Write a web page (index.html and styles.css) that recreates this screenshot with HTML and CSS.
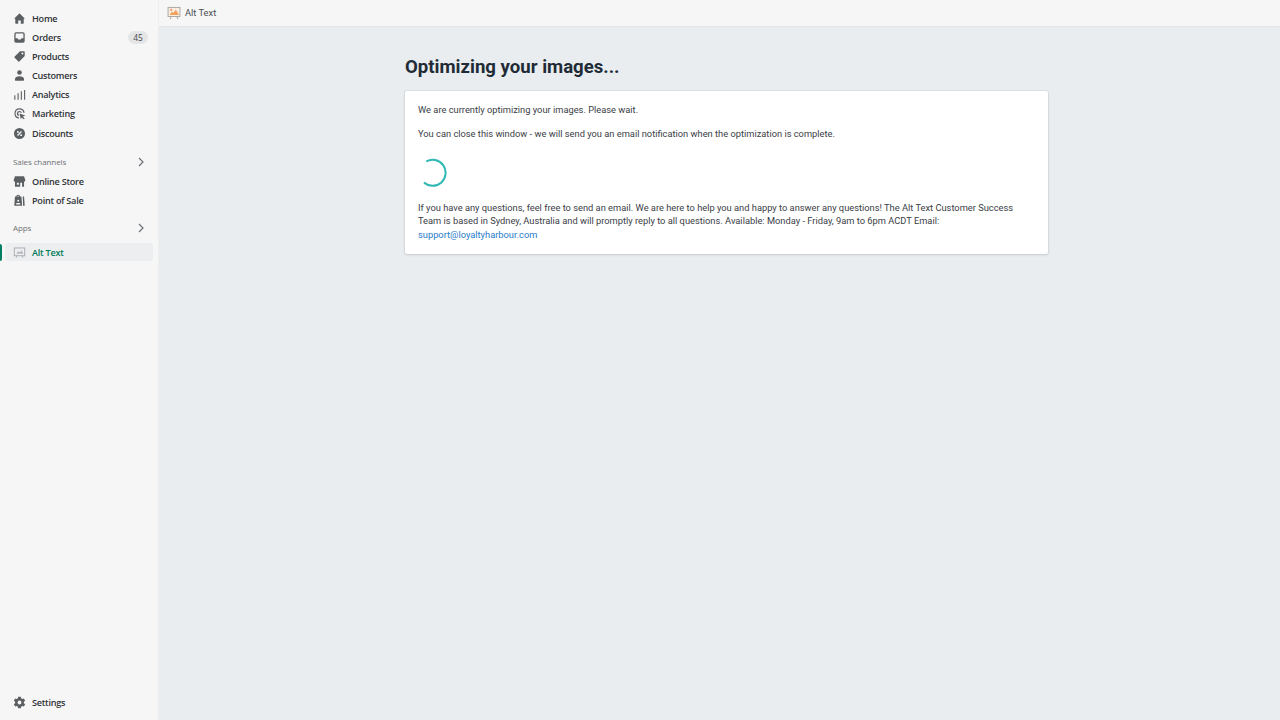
FILE: index.html
```html
<!DOCTYPE html>
<html lang="en">
<head>
<meta charset="utf-8">
<title>Alt Text</title>
<link rel="stylesheet" href="styles.css">
</head>
<body>
<div class="app">
  <nav class="sidebar">
    <ul class="nav-list">
      <li class="nav-item"><svg class="icon" viewBox="0 0 20 20"><path d="M18 10 10.700 2.600a1 1 0 0 0-1.400 0L2 10v.5h1.500V17a1 1 0 0 0 1 1H8v-5h4v5h3.500a1 1 0 0 0 1-1v-6.500H18z"/></svg><span>Home</span></li>
      <li class="nav-item"><svg class="icon" viewBox="0 0 20 20"><path fill-rule="evenodd" d="M4.500 2h11A2.500 2.500 0 0 1 18 4.500v11a2.500 2.500 0 0 1-2.500 2.500h-11A2.500 2.500 0 0 1 2 15.500v-11A2.500 2.500 0 0 1 4.500 2zM4 4.500V11h3l1 2h4l1-2h3V4.500a.5.5 0 0 0-.5-.5h-11a.5.5 0 0 0-.5.5z"/></svg><span>Orders</span><span class="badge">45</span></li>
      <li class="nav-item"><svg class="icon" viewBox="0 0 20 20"><path fill-rule="evenodd" d="M11 2h6a1 1 0 0 1 1 1v6a1 1 0 0 1-.3.7l-8 8a1 1 0 0 1-1.400 0l-6-6a1 1 0 0 1 0-1.400l8-8A1 1 0 0 1 11 2zm3.500 5a1.500 1.500 0 1 0 0-3 1.500 1.500 0 0 0 0 3z"/></svg><span>Products</span></li>
      <li class="nav-item"><svg class="icon" viewBox="0 0 20 20"><circle cx="10" cy="5.500" r="3.500"/><path d="M3 15.500C3 12.500 6 11 10 11s7 1.500 7 4.500V17a1 1 0 0 1-1 1H4a1 1 0 0 1-1-1z"/></svg><span>Customers</span></li>
      <li class="nav-item"><svg class="icon" viewBox="0 0 20 20"><path d="M2 11h1.700v7H2zM7 8h1.700v10H7zM12 5h1.700v13H12zM17 3h1.700v15H17z"/></svg><span>Analytics</span></li>
      <li class="nav-item"><svg class="icon" viewBox="0 0 20 20"><path d="M10 2a8 8 0 0 0-1 15.900v-2A6 6 0 1 1 15.900 9h2A8 8 0 0 0 10 2z"/><path d="M10 6a4 4 0 0 0-1 7.900v-2.200A2 2 0 1 1 11.700 9h2.200A4 4 0 0 0 10 6z"/><path d="M10 10l9 3-4 1.500 3 3-1.500 1.500-3-3L12 19z"/></svg><span>Marketing</span></li>
      <li class="nav-item"><svg class="icon" viewBox="0 0 20 20"><path fill-rule="evenodd" d="M10 1.500a8.500 8.500 0 1 1 0 17 8.500 8.500 0 0 1 0-17zM12.300 6.300l-6 6 1.400 1.400 6-6zM7.500 9a1.500 1.500 0 1 0 0-3 1.500 1.500 0 0 0 0 3zm5 5a1.500 1.500 0 1 0 0-3 1.500 1.500 0 0 0 0 3z"/></svg><span>Discounts</span></li>
    </ul>
    <div class="section-head section-sales"><span>Sales channels</span><svg class="chevron" viewBox="0 0 10 10"><path d="M3 1l4 4-4 4"/></svg></div>
    <ul class="nav-list">
      <li class="nav-item"><svg class="icon" viewBox="0 0 20 20"><path fill-rule="evenodd" d="M3 2h14l2 6a2.500 2.500 0 0 1-2 2.400V18H3v-7.600A2.500 2.500 0 0 1 1 8zM6 12v3h3v-3zm5 0v6h3v-6z"/></svg><span>Online Store</span></li>
      <li class="nav-item"><svg class="icon" viewBox="0 0 20 20"><path fill-rule="evenodd" d="M8 1a3 3 0 0 1 3 3h2l1 14H2L3 4h2a3 3 0 0 1 3-3zM6.500 4h3a1.500 1.500 0 0 0-3 0zM8 9a1.500 1.500 0 1 0 0 3 1.500 1.500 0 0 0 0-3zM5 14v2h6v-2z"/><path d="M15 4h2l1 14h-2.500z"/></svg><span>Point of Sale</span></li>
    </ul>
    <div class="section-head section-apps"><span>Apps</span><svg class="chevron" viewBox="0 0 10 10"><path d="M3 1l4 4-4 4"/></svg></div>
    <div class="nav-active">
      <span class="active-bar"></span>
      <div class="active-pill">
        <svg class="icon" viewBox="0 0 20 20"><rect x="2" y="3" width="16" height="12" fill="none" stroke="#a9adb1" stroke-width="1.500"/><path d="M5 12l3-4 2 2 3-3 3 5z" fill="#b5b8bb"/><path d="M6 15l-1 3M14 15l1 3" stroke="#a9adb1" stroke-width="1.500"/></svg>
        <span>Alt Text</span>
      </div>
    </div>
    <div class="nav-item settings"><svg class="icon" viewBox="0 0 20 20"><path fill-rule="evenodd" d="M8 1h4l.6 2.600 1.500.9 2.600-.8 2 3.500-2 1.800v2l2 1.800-2 3.500-2.600-.8-1.500.9L12 19H8l-.6-2.600-1.500-.9-2.600.8-2-3.500 2-1.800V9L1.300 7.200l2-3.500 2.600.8 1.500-.9zM10 7a3 3 0 1 0 0 6 3 3 0 0 0 0-6z"/></svg><span>Settings</span></div>
  </nav>
  <div class="content">
    <header class="topbar">
      <svg class="top-icon" viewBox="0 0 20 20"><rect x="1.500" y="2" width="17" height="13" fill="#fbeee2" stroke="#a8a29c" stroke-width="1.300"/><path d="M3.500 13l4-5 2 2 3-5 4.500 8z" fill="#f2a05a"/><circle cx="6" cy="5.500" r="1.500" fill="#ef8f6a"/><path d="M6 15l-1.500 4M14 15l1.500 4" stroke="#a8a29c" stroke-width="1.300"/></svg>
      <span>Alt Text</span>
    </header>
    <main class="main">
      <h1 class="title">Optimizing your images...</h1>
      <section class="card">
        <p class="line">We are currently optimizing your images. Please wait.</p>
        <p class="line">You can close this window - we will send you an email notification when the optimization is complete.</p>
        <svg class="spinner" viewBox="0 0 30 30"><path d="M8.200 3.500A13 13 0 1 1 6 24.500"/></svg>
        <p class="help">If you have any questions, feel free to send an email. We are here to help you and happy to answer any questions! The Alt Text Customer Success Team is based in Sydney, Australia and will promptly reply to all questions. Available: Monday - Friday, 9am to 6pm ACDT Email: <a href="#">support@loyaltyharbour.com</a></p>
      </section>
    </main>
  </div>
</div>
</body>
</html>
```
FILE: styles.css
```css
* { box-sizing: border-box; }
html, body { margin: 0; height: 100%; }
body { font-family: Roboto, "Liberation Sans", sans-serif; color: #202223; overflow: hidden; }
ul { list-style: none; margin: 0; padding: 0; }

.app { display: flex; width: 1280px; height: 720px; }

.sidebar {
  width: 159px; flex: none; height: 720px;
  background: #f6f6f7; border-right: 1px solid #eceef0;
  display: flex; flex-direction: column;
  padding-top: 8.600px;
}
.nav-item {
  height: 19.170px; display: flex; align-items: center;
  padding: 0 10px 0 13px;
  font-family: "Open Sans", sans-serif;
  font-size: 9.100px; font-weight: 600; letter-spacing: -.25px; color: #303438;
}
.icon { width: 13px; height: 13px; flex: none; margin-right: 6px; fill: #5c5f62; }
.badge {
  margin-left: auto; width: 20px; height: 13px; border-radius: 7px;
  background: #e4e5e7; color: #44474a; font-size: 8.400px; font-weight: 400; letter-spacing: 0;
  display: flex; align-items: center; justify-content: center;
}
.section-head {
  display: flex; align-items: center; justify-content: space-between;
  height: 19px; padding: 0 12px 0 13px;
  font-family: "Open Sans", sans-serif;
  font-size: 8px; letter-spacing: -.1px; color: #6d7175; font-weight: 400;
}
.section-head span { margin-top: -2px; }
.section-sales { margin-top: 9.900px; }
.section-apps { margin-top: 9px; }
.chevron { width: 10px; height: 10px; fill: none; stroke: #6d7175; stroke-width: 1.200; }

.nav-active { display: flex; align-items: center; height: 19px; margin-top: 5px; }
.active-bar { width: 2px; height: 17px; background: #008060; border-radius: 0 2px 2px 0; flex: none; }
.active-pill {
  flex: none; width: 148px; margin-left: 3px; height: 18px; padding-left: 8px;
  background: #edeeef; border-radius: 3px;
  display: flex; align-items: center;
  font-family: "Open Sans", sans-serif;
  font-size: 9.100px; font-weight: 600; letter-spacing: -.25px; color: #007a5a;
}
.settings { margin-top: auto; margin-bottom: 8px; }

.content { flex: 1; display: flex; flex-direction: column; min-width: 0; }
.topbar {
  height: 27px; flex: none; background: #f6f6f7; border-bottom: 1px solid #e3e6e8;
  display: flex; align-items: center; gap: 4px; padding: 0 0 1px 8px;
  font-size: 9.300px; color: #4a4e52;
}
.top-icon { width: 14px; height: 14px; flex: none; }

.main { flex: 1; background: #e9edf0; padding: 0 232px 0 246px; }
.title {
  margin: 27.500px 0 11.500px; font-size: 18.600px; line-height: 25px;
  font-weight: 700; color: #212b36;
}
.card {
  background: #fff; border-radius: 2px; height: 163px; padding: 12px 13px;
  box-shadow: 0 0 0 1px rgba(63,63,68,.05), 0 1px 3px rgba(63,63,68,.15);
  font-size: 9.300px; line-height: 13px; color: #3a4046;
}
.line { margin: 0 0 11px; }
.spinner { display: block; width: 30px; height: 30px; margin: 18px 0 13px 0; fill: none; stroke: #2fb8b4; stroke-width: 2; }
.help { margin: 0; line-height: 13.300px; }
.help a { color: #1f7bc9; text-decoration: none; }
```
